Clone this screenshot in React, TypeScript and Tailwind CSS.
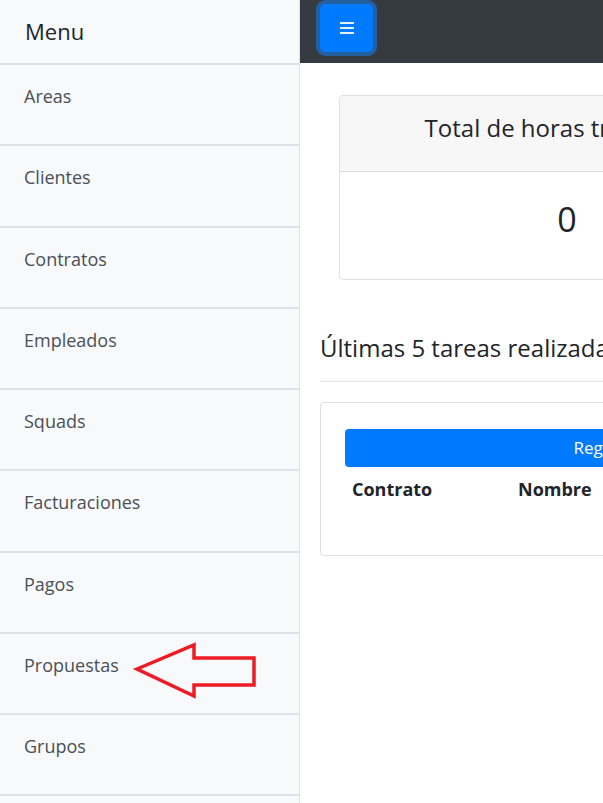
import React from 'react';

const menuItems = ['Areas', 'Clientes', 'Contratos', 'Empleados', 'Squads', 'Facturaciones', 'Pagos', 'Propuestas', 'Grupos'];

function ArrowMark() {
  return (
    <svg className="absolute left-[130px] top-[4px]" width="132" height="62" viewBox="130 636 132 62">
      <polygon
        points="137,667 194,643 194,656 254,656 254,683 194,683 194,694"
        fill="none"
        stroke="#ed1c24"
        strokeWidth="3.5"
        strokeLinejoin="miter"
      />
    </svg>
  );
}

export default function App() {
  return (
    <div
      className="flex w-[603px] h-[803px] overflow-hidden bg-white text-[#212529]"
      style={{ fontFamily: '"Open Sans", "Noto Sans", sans-serif' }}
    >
      {/* Sidebar */}
      <div className="w-[300px] shrink-0 bg-[#f8f9fa] border-r border-[#dee2e6]">
        <div className="h-[65px] pl-[25px] pt-[13px] text-[22px] leading-[36px] text-[#212529] border-b-2 border-[#dee2e6]">
          Menu
        </div>
        {menuItems.map((item) => (
          <div
            key={item}
            className="relative h-[81.25px] pl-[24px] pt-[18px] text-[18px] leading-[26px] text-[#495057] border-b-2 border-[#dee2e6]"
          >
            {item}
            {item === 'Propuestas' && <ArrowMark />}
          </div>
        ))}
      </div>

      {/* Main */}
      <div className="w-[700px] shrink-0">
        <div className="h-[63px] bg-[#343a40] flex items-start pl-[20px] pt-[4px]">
          <button className="w-[53px] h-[48px] rounded-[5px] bg-[#007bff] ring-4 ring-[#24609f] flex items-center justify-center">
            <span className="flex flex-col gap-[3px]">
              <span className="block w-[14px] h-[2px] bg-[#e6f0ff]" />
              <span className="block w-[14px] h-[2px] bg-[#e6f0ff]" />
              <span className="block w-[14px] h-[2px] bg-[#e6f0ff]" />
            </span>
          </button>
        </div>

        <div className="px-[20px] pt-[32px]">
          {/* Total card */}
          <div className="ml-[19px] w-[456px] border border-[#dfdfdf] rounded-[4px] overflow-hidden">
            <div className="h-[76px] bg-[#f7f7f7] border-b border-[#dfdfdf] pt-[14px] text-center text-[24px] leading-[36px]">
              Total de horas trabajadas
            </div>
            <div className="h-[107px] pt-[22px] text-center text-[34px] leading-[50px]">
              0
            </div>
          </div>

          <h4 className="mt-[50px] text-[24px] leading-[36px]">Últimas 5 tareas realizadas</h4>
          <hr className="mt-[15px] border-t border-[#e5e5e5]" />

          <div className="mt-[20px] border border-[#dfdfdf] rounded-[4px] pt-[26px] px-[24px] h-[154px]">
            <button className="w-[574px] h-[38px] rounded-[4px] bg-[#007bff] text-white text-[17px]">
              Registrar tarea
            </button>
            <table className="w-full">
              <thead>
                <tr>
                  <th className="text-left font-bold px-[7px] py-[9px] w-[166px] text-[18px] leading-[26px]">Contrato</th>
                  <th className="text-left font-bold px-[7px] py-[9px] text-[18px] leading-[26px]">Nombre</th>
                  <th className="text-left font-bold px-[7px] py-[9px] text-[18px] leading-[26px]">Fecha</th>
                </tr>
              </thead>
            </table>
          </div>
        </div>
      </div>
    </div>
  );
}
